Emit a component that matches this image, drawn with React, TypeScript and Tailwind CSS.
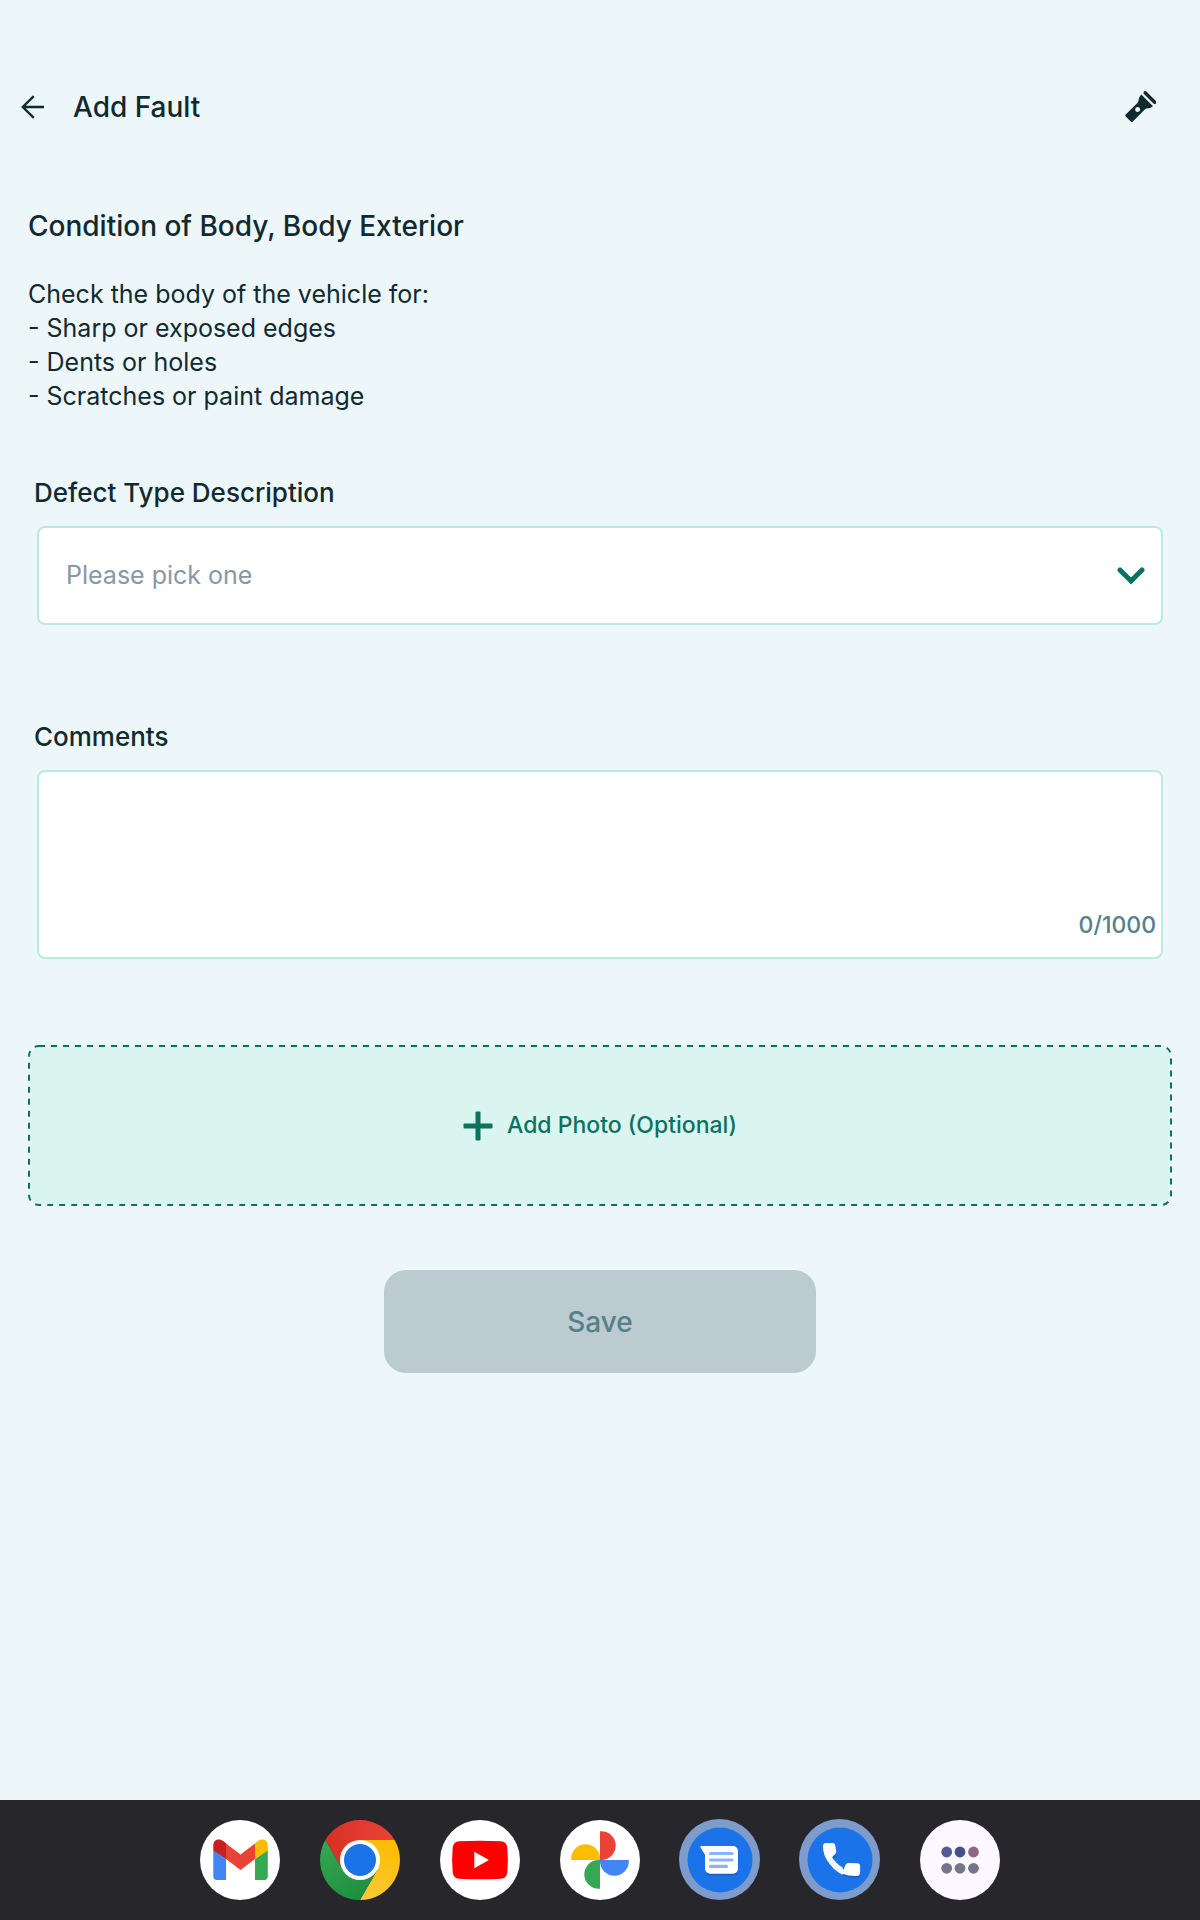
import React, { useState } from 'react';

const MAX_COMMENT_LENGTH = 1000;

const DEFECT_TYPES = ['Sharp or exposed edges', 'Dents or holes', 'Scratches or paint damage'];

function ArrowLeftIcon() {
  return (
    <svg viewBox="0 0 24 24" className="h-6 w-6" fill="none" stroke="currentColor" strokeWidth="2.4">
      <path d="M23 12H2M12.8 1.2 1.8 12l11 10.8" />
    </svg>
  );
}

function FlashlightIcon() {
  return (
    <svg viewBox="0 0 32 32" className="h-8 w-8" fill="currentColor">
      <path d="m21.2 1.800 9.500 9.500" stroke="currentColor" strokeWidth="3.400" strokeLinecap="round" />
      <path
        fillRule="evenodd"
        d="M17.4 3.600 29 15.200c-2 1.800-4.400 2-6.400 2.400-.8.2-1.300.5-1.800 1L8.800 30.600a1.500 1.500 0 0 1-2.100 0l-5-5a1.500 1.500 0 0 1 0-2.100L13.400 12c.7-.7.900-1.200 1-2 .3-2.400 1-4.500 3-6.400zM13.700 15.900a2.500 2.500 0 1 0 0 5 2.500 2.500 0 0 0 0-5z"
      />
    </svg>
  );
}

function ChevronDownIcon() {
  return (
    <svg viewBox="0 0 28 18" className="h-[18px] w-7" fill="none" stroke="currentColor" strokeWidth="5">
      <path d="m3 3 11 11L25 3" strokeLinecap="round" />
    </svg>
  );
}

function PlusIcon() {
  return (
    <svg viewBox="0 0 30 30" className="h-[30px] w-[30px]" fill="currentColor">
      <rect x="0.5" y="12.5" width="29" height="5" rx="1" />
      <rect x="12.5" y="0.5" width="5" height="29" rx="1" />
    </svg>
  );
}

// Evenly spaced dashes, CSS borders leave shorter gaps
function DashedOutline() {
  return (
    <svg className="pointer-events-none absolute -inset-px h-[calc(100%+2px)] w-[calc(100%+2px)] overflow-visible">
      <rect width="100%" height="100%" rx="10" fill="none" stroke="#0b725f" strokeWidth="2" strokeDasharray="6 6" />
    </svg>
  );
}

function GmailIcon() {
  return (
    <svg viewBox="0 0 80 80" className="h-20 w-20">
      <circle cx="40" cy="40" r="40" fill="#fff" />
      <path d="M13.3 30 26 39v21h-9a3.7 3.7 0 0 1-3.7-3.7z" fill="#4285f4" />
      <path d="M55 39l12.800-9v26.300a3.700 3.700 0 0 1-3.700 3.700H55z" fill="#34a853" />
      <path d="m26 23.600 14.500 10.800L55 23.600V39L40.500 50 26 39z" fill="#ea4335" />
      <path d="M13.300 30.400V25c0-5.400 6-7.200 10.200-3.800l2.500 2V39z" fill="#c5221f" />
      <path d="M67.800 30.400V25c0-5.400-6-7.200-10.200-3.800l-2.600 2V39z" fill="#fbbc04" />
    </svg>
  );
}

function ChromeIcon() {
  return (
    <svg viewBox="0 0 80 80" className="h-20 w-20">
      <defs>
        <linearGradient id="chromeRed" x1="0" y1="0" x2="1" y2="0">
          <stop offset="0" stopColor="#d93025" />
          <stop offset="1" stopColor="#ea4335" />
        </linearGradient>
        <linearGradient id="chromeYellow" x1="0.6" y1="0" x2="0.3" y2="1">
          <stop offset="0" stopColor="#fbbc04" />
          <stop offset="1" stopColor="#fcc934" />
        </linearGradient>
        <linearGradient id="chromeGreen" x1="0" y1="0" x2="0.7" y2="1">
          <stop offset="0" stopColor="#34a853" />
          <stop offset="1" stopColor="#1e8e3e" />
        </linearGradient>
      </defs>
      <path d="M5.4 20A40 40 0 0 1 74.600 20H40L22.700 50z" fill="url(#chromeRed)" />
      <path d="M74.600 20A40 40 0 0 1 40 80l17.300-30L40 20z" fill="url(#chromeYellow)" />
      <path d="M40 80A40 40 0 0 1 5.400 20l17.300 30h34.600z" fill="url(#chromeGreen)" />
      <circle cx="40" cy="40" r="20" fill="#fff" />
      <circle cx="40" cy="40" r="16" fill="#1a73e8" />
    </svg>
  );
}

function YoutubeIcon() {
  return (
    <svg viewBox="0 0 80 80" className="h-20 w-20">
      <circle cx="40" cy="40" r="40" fill="#fff" />
      <path
        d="M19 21.200Q40 20.200 61 21.200 66.500 21.600 67.300 27.500 68.500 40 67.300 52.500 66.500 58.300 61 58.800 40 59.900 19 58.800 13.500 58.300 12.700 52.500 11.500 40 12.700 27.500 13.500 21.600 19 21.200z"
        fill="#f00"
      />
      <path d="M34.300 31.800 49 40l-14.700 8.200z" fill="#fff" />
    </svg>
  );
}

function PhotosIcon() {
  return (
    <svg viewBox="0 0 80 80" className="h-20 w-20">
      <circle cx="40" cy="40" r="40" fill="#fff" />
      <path d="M40 11.200h1.300a14.400 14.400 0 0 1 0 28.800H40z" fill="#ea4335" />
      <path d="M11.200 40v-1.300a14.400 14.400 0 0 1 28.800 0V40z" fill="#fbbc04" />
      <path d="M68.800 40v1.300a14.400 14.400 0 0 1-28.800 0V40z" fill="#4285f4" />
      <path d="M40 68.800h-1.300a14.400 14.400 0 0 1 0-28.800H40z" fill="#34a853" />
    </svg>
  );
}

function MessagesIcon() {
  return (
    <svg viewBox="0 0 80 80" className="h-20 w-20 overflow-visible">
      <circle cx="39.5" cy="39.5" r="40.5" fill="#7e9ccb" />
      <circle cx="40" cy="40" r="32.5" fill="#1a73e8" />
      <path
        d="M21 27.500h32.500a5 5 0 0 1 5 5v18a5 5 0 0 1-5 5H30a5 5 0 0 1-5-5V36z"
        fill="#1557b0"
        opacity="0.6"
      />
      <path
        d="M21.300 26H53a5 5 0 0 1 5 5v17.700a5 5 0 0 1-5 5H30a5 5 0 0 1-5-5V34.700l-4.500-7.200q-.6-1.500.8-1.500z"
        fill="#fff"
      />
      <g stroke="#8ab4f8" strokeWidth="3.2" strokeLinecap="round">
        <path d="M30.500 33.500H52M30.500 40H52M30.500 46.300H46.500" />
      </g>
    </svg>
  );
}

function PhoneIcon() {
  return (
    <svg viewBox="0 0 80 80" className="h-20 w-20 overflow-visible">
      <circle cx="39.5" cy="39.5" r="40.5" fill="#7e9ccb" />
      <circle cx="40" cy="40" r="32.5" fill="#1a73e8" />
      <path
        d="M23 28c1 16 16 30 32 30q5 0 5-4v-6l-14-1-4 5-10-10 4-6z"
        fill="#1557b0"
        opacity="0.6"
      />
      <path d="M28.500 38.500l3-2.500c2.300 4.500 6 8.400 10.800 11.200l2 4.500-1.800 3C36 52 30 45.500 27 40z" fill="#f1f3f4" />
      <path
        d="M26 23h6.300q2.400 0 2.900 2.300l1 6q.2 1.700-1 2.800L27.800 41.500C24.700 37 23 32.500 23 26.300Q23 23 26 23z"
        fill="#fff"
      />
      <path
        d="M41.800 53.500l4-9q.8-1.600 2.600-1.500l8.700.3q3 .2 3 3v6q0 3.800-3.600 3.800-7.700.2-14.700-2.600z"
        fill="#fff"
      />
    </svg>
  );
}

function AllAppsIcon() {
  return (
    <svg viewBox="0 0 80 80" className="h-20 w-20">
      <circle cx="40" cy="40" r="40" fill="#fdf8ff" />
      <circle cx="26.7" cy="32" r="5.4" fill="#525c98" />
      <circle cx="40" cy="32" r="5.4" fill="#454f8b" />
      <circle cx="53.5" cy="32" r="5.4" fill="#8f6884" />
      <circle cx="26.7" cy="48.3" r="5.4" fill="#73768b" />
      <circle cx="40" cy="48.3" r="5.4" fill="#73768b" />
      <circle cx="53.5" cy="48.3" r="5.4" fill="#73768b" />
    </svg>
  );
}

const DOCK_APPS = [
  { name: 'Gmail', Icon: GmailIcon },
  { name: 'Chrome', Icon: ChromeIcon },
  { name: 'YouTube', Icon: YoutubeIcon },
  { name: 'Photos', Icon: PhotosIcon },
  { name: 'Messages', Icon: MessagesIcon },
  { name: 'Phone', Icon: PhoneIcon },
  { name: 'All apps', Icon: AllAppsIcon },
];

export default function App() {
  const [defectType, setDefectType] = useState('');
  const [comments, setComments] = useState('');

  return (
    <div className="flex min-h-screen flex-col bg-[#edf6f9] font-['Inter',sans-serif] text-[#102a2f]">
      {/* Top bar */}
      <header className="flex items-center justify-between pt-20 pr-11 pl-[21px]">
        <div className="flex items-center gap-7">
          <button type="button" aria-label="Back">
            <ArrowLeftIcon />
          </button>
          <h1 className="text-[28px] leading-[54px] font-medium">Add Fault</h1>
        </div>
        <button type="button" aria-label="Toggle flashlight">
          <FlashlightIcon />
        </button>
      </header>

      <form className="flex flex-1 flex-col px-7 pt-[72px]" onSubmit={(e) => e.preventDefault()}>
        <h2 className="text-[28px] leading-10 font-medium">Condition of Body, Body Exterior</h2>
        <p className="mt-[31px] text-[25px] leading-[34px]">
          Check the body of the vehicle for:
          <br />- Sharp or exposed edges
          <br />- Dents or holes
          <br />- Scratches or paint damage
        </p>

        {/* Defect picker */}
        <div className="mt-[63px] flex flex-col px-[9px]">
          <label htmlFor="defect-type" className="-ml-[3px] text-[26px] leading-[34px] font-medium">
            Defect Type Description
          </label>
          <div className="relative mt-4">
            <select
              id="defect-type"
              value={defectType}
              onChange={(e) => setDefectType(e.target.value)}
              className="h-[99px] w-full appearance-none rounded-lg border-2 border-[#b9eae0] bg-white pr-16 pl-[27px] text-[25px] text-[#8a97a4] outline-none"
            >
              <option value="">Please pick one</option>
              {DEFECT_TYPES.map((type) => (
                <option key={type} value={type}>
                  {type}
                </option>
              ))}
            </select>
            <span className="pointer-events-none absolute inset-y-0 right-[18px] flex items-center text-[#0b725f]">
              <ChevronDownIcon />
            </span>
          </div>
        </div>

        {/* Comments */}
        <div className="mt-[95px] flex flex-col px-[9px]">
          <label htmlFor="comments" className="-ml-[3px] text-[26px] leading-[34px] font-medium">
            Comments
          </label>
          <div className="mt-4 flex h-[189px] flex-col rounded-lg border-2 border-[#b9eae0] bg-white">
            <textarea
              id="comments"
              value={comments}
              maxLength={MAX_COMMENT_LENGTH}
              onChange={(e) => setComments(e.target.value)}
              className="flex-1 resize-none bg-transparent px-[27px] pt-5 text-[25px] leading-[34px] outline-none"
            />
            <span className="pr-[5px] pb-4 text-right text-[23px] leading-8 font-medium text-[#56808a]">
              {comments.length}/{MAX_COMMENT_LENGTH}
            </span>
          </div>
        </div>

        <button
          type="button"
          className="relative mt-[86px] flex h-[161px] items-center justify-center gap-[14px] rounded-xl border-2 border-transparent bg-[#daf4ef] bg-clip-padding text-[23px] font-medium text-[#0b725f]"
        >
          <DashedOutline />
          <PlusIcon />
          Add Photo (Optional)
        </button>

        <button
          type="submit"
          disabled
          className="mt-16 h-[103px] w-[432px] self-center rounded-[22px] bg-[#bccbcf] text-[28px] font-medium text-[#56808a]"
        >
          Save
        </button>
      </form>

      {/* Tablet dock */}
      <nav className="flex h-[120px] items-center justify-center gap-10 bg-[#26262b]">
        {DOCK_APPS.map(({ name, Icon }) => (
          <button key={name} type="button" aria-label={name}>
            <Icon />
          </button>
        ))}
      </nav>
    </div>
  );
}
